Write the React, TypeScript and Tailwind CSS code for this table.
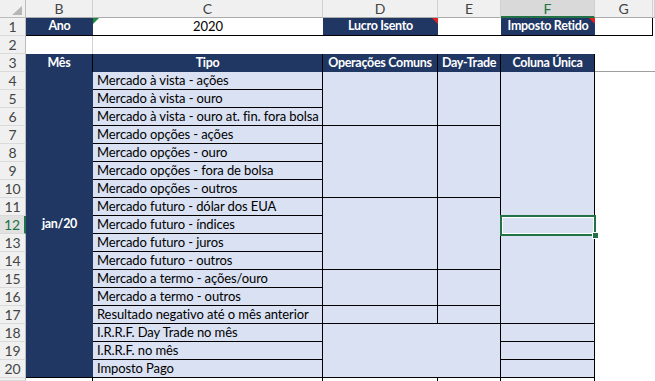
import React from "react";

// planilha de apuração mensal — bloco de jan/20
const TIPOS = [
  "Mercado à vista - ações",
  "Mercado à vista - ouro",
  "Mercado à vista - ouro at. fin. fora bolsa",
  "Mercado opções - ações",
  "Mercado opções - ouro",
  "Mercado opções - fora de bolsa",
  "Mercado opções - outros",
  "Mercado futuro - dólar dos EUA",
  "Mercado futuro - índices",
  "Mercado futuro - juros",
  "Mercado futuro - outros",
  "Mercado a termo - ações/ouro",
  "Mercado a termo - outros",
  "Resultado negativo até o mês anterior",
  "I.R.R.F. Day Trade no mês",
  "I.R.R.F. no mês",
  "Imposto Pago",
];

// linhas onde começa cada grupo mesclado de D/E (Operações Comuns / Day-Trade)
const DE_GROUPS: Record<number, string> = {
  4: "row-span-3",
  7: "row-span-4",
  11: "row-span-4",
  15: "row-span-2",
  17: "row-span-1",
};

// Coluna Única: bloco grande + três linhas de imposto
const F_GROUPS: Record<number, string> = {
  4: "row-span-14",
  18: "row-span-1",
  19: "row-span-1",
  20: "row-span-1",
};

const COLS = ["B", "C", "D", "E", "F", "G", ""];

const navy =
  "bg-[#203764] text-white text-[12.5px] tracking-[-0.3px] font-bold flex items-center justify-center whitespace-nowrap";
const fill = "bg-[#d9e1f2] border-r border-b border-black";

function RowHead({ n, label = true }: { n: number; label?: boolean }) {
  const active = n === 12;
  return (
    <div
      className={`col-start-1 flex items-center justify-center border-b border-[#dadada] text-[14px] ${
        active
          ? "border-r-2 border-r-[#217346] bg-[#e1e1e1] text-[#217346]"
          : "border-r border-r-[#bdbdbd] bg-[#f0f0f0] text-[#444]"
      }`}
    >
      {label ? n : null}
    </div>
  );
}

function Corner() {
  return (
    <div className="flex items-end justify-end border-r border-b border-[#bdbdbd] bg-[#f0f0f0] pr-[3px] pb-[2px]">
      <svg width="10" height="9" viewBox="0 0 10 9">
        <polygon points="10,0 10,9 0,9" fill="#b5b5b5" />
      </svg>
    </div>
  );
}

function ColHead({ label }: { label: string }) {
  const active = label === "F";
  return (
    <div
      className={`flex items-center justify-center border-r border-r-[#d0d0d0] text-[14px] ${
        active
          ? "border-b-2 border-b-[#217346] bg-[#d9d9d9] text-[#217346]"
          : "border-b border-b-[#ababab] bg-[#f0f0f0] text-[#444]"
      }`}
    >
      {label}
    </div>
  );
}

function CommentMark() {
  return (
    <svg className="absolute right-0 top-0" width="6" height="6" viewBox="0 0 6 6">
      <polygon points="0,0 6,0 6,6" fill="#e02020" />
    </svg>
  );
}

export default function App() {
  const body: React.ReactNode[] = [];

  for (let n = 4; n <= 20; n++) {
    body.push(<RowHead key={`rh${n}`} n={n} />);
    if (n === 4) {
      body.push(
        <div key="mes" className={`row-span-17 border-b border-black ${navy}`}>
          jan/20
        </div>
      );
    }
    body.push(
      <div key={`c${n}`} className={`${fill} flex items-center pl-1 whitespace-nowrap`}>
        {TIPOS[n - 4]}
      </div>
    );
    if (DE_GROUPS[n]) {
      body.push(<div key={`d${n}`} className={`${DE_GROUPS[n]} ${fill}`} />);
      body.push(<div key={`e${n}`} className={`${DE_GROUPS[n]} ${fill}`} />);
    }
    if (n === 18) {
      body.push(<div key="de18" className={`col-span-2 row-span-3 ${fill}`} />);
    }
    if (F_GROUPS[n]) {
      body.push(<div key={`f${n}`} className={`${F_GROUPS[n]} ${fill}`} />);
    }
  }

  return (
    <div className="relative h-[381px] w-[655px] overflow-hidden bg-white font-[Lato,'Noto_Sans',sans-serif] text-[13px] tracking-[-0.1px] text-black">
      <div className="grid h-full grid-cols-[26px_67px_230px_115px_63px_94px_58px_1fr] grid-rows-[18px_repeat(20,18px)_1fr]">
        {/* cabeçalho de colunas */}
        <Corner />
        {COLS.map((c, i) => (
          <ColHead key={i} label={c} />
        ))}

        {/* linha 1: parâmetros */}
        <RowHead n={1} />
        <div className={`border-b border-black ${navy}`}>Ano</div>
        <div className="relative flex items-center justify-center border-b border-black">
          2020
          <svg className="absolute left-0 top-0" width="6" height="6" viewBox="0 0 6 6">
            <polygon points="0,0 6,0 0,6" fill="#1e8a3c" />
          </svg>
        </div>
        <div className={`relative border-b border-black ${navy}`}>
          Lucro Isento
          <CommentMark />
        </div>
        <div className="border-b border-black" />
        <div className={`relative border-b border-black ${navy}`}>
          Imposto Retido
          <CommentMark />
        </div>
        <div className="border-r border-b border-black" />
        <div />

        {/* linha 2 */}
        <RowHead n={2} />
        <div className="border-r border-[#d4d4d4]" />
        <div className="col-span-6" />

        {/* linha 3: títulos */}
        <RowHead n={3} />
        <div className={`border-r border-black ${navy}`}>Mês</div>
        <div className={`border-r border-black ${navy}`}>Tipo</div>
        <div className={`border-r border-black ${navy}`}>Operações Comuns</div>
        <div className={`border-r border-black ${navy}`}>Day-Trade</div>
        <div className={`border-r border-black ${navy}`}>Coluna Única</div>
        <div className="border-b border-[#9e9e9e]" />
        <div className="border-b border-[#9e9e9e]" />

        {body}

        {/* linha 21, início do próximo mês */}
        <RowHead n={21} label={false} />
        <div className="border-r border-black" />
        <div className="border-r border-black" />
        <div className="border-r border-black" />
        <div className="border-r border-black" />
        <div className="border-r border-black" />
      </div>

      {/* célula ativa F12 */}
      <div className="absolute left-[500px] top-[215px] h-[21px] w-[96px] border-2 border-[#217346] shadow-[inset_0_0_0_1px_white]" />
      <div className="absolute left-[592px] top-[232px] h-[7px] w-[7px] border border-white bg-[#217346]" />
    </div>
  );
}
